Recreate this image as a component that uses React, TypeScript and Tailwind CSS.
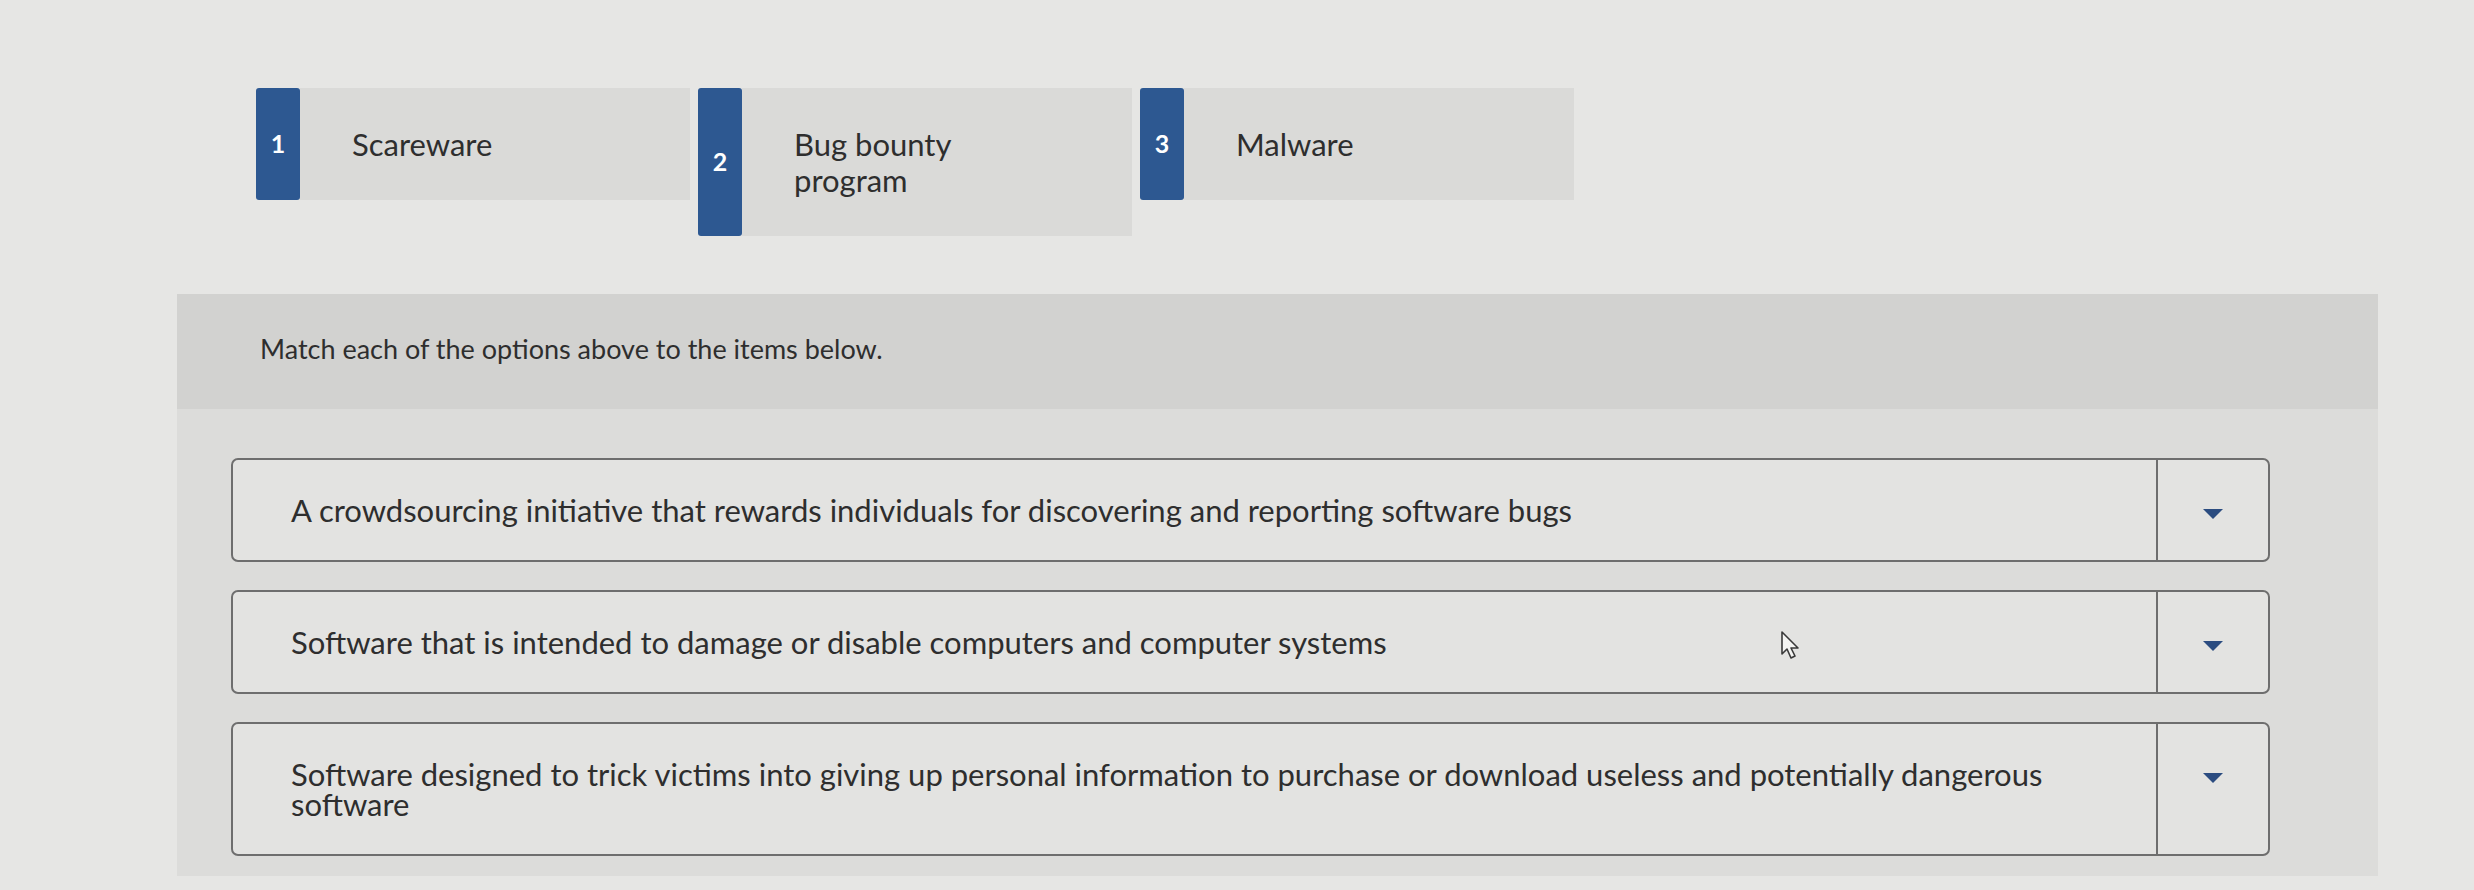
const options = [
  { n: "1", label: "Scareware" },
  { n: "2", label: "Bug bounty program" },
  { n: "3", label: "Malware" },
];

const items = [
  "A crowdsourcing initiative that rewards individuals for discovering and reporting software bugs",
  "Software that is intended to damage or disable computers and computer systems",
  "Software designed to trick victims into giving up personal information to purchase or download useless and potentially dangerous software",
];

const Option = ({ n, label }: { n: string; label: string }) => (
  <div className="flex items-stretch w-[434px]">
    <div className="w-[44px] shrink-0 bg-[#2d5891] rounded-[3px] flex items-center justify-center text-white font-bold text-[25px]">
      {n}
    </div>
    <div className="flex-1 bg-[#dadad8] pl-[52px] pr-[110px] py-[38px] text-[31px] leading-[36px] text-[#2e2e2e]">
      {label}
    </div>
  </div>
);

const MatchRow = ({ text }: { text: string }) => (
  <div className="flex border-2 border-[#6e6e6e] rounded-[7px] bg-[#e3e3e1]">
    <div className="flex-1 pl-[58px] pr-[60px] py-[35px] text-[31px] leading-[30px] text-[#2e2e2e]">
      {text}
    </div>
    <div className="w-[112px] shrink-0 border-l-2 border-[#6e6e6e] flex justify-center pt-[48px]">
      <svg width="22" height="12" viewBox="0 0 22 12">
        <path d="M1 1 L21 1 L11 11 Z" fill="#2b4c80" />
      </svg>
    </div>
  </div>
);

export default function App() {
  return (
    <div
      className="relative w-[2474px] h-[890px] overflow-hidden bg-[#e6e6e4] pl-[177px] pt-[88px]"
      style={{ fontFamily: "Lato, 'Open Sans', sans-serif" }}
    >
      <div className="flex items-start gap-[8px] ml-[79px]">
        {options.map((o) => (
          <Option key={o.n} n={o.n} label={o.label} />
        ))}
      </div>

      <div className="mt-[58px] w-[2201px] h-[582px] bg-[#dcdcda]">
        <div className="h-[115px] bg-[#d2d2d0] pl-[83px] pt-[35px] text-[27px] text-[#2e2e2e]">
          Match each of the options above to the items below.
        </div>
        <div className="flex flex-col gap-[28px] pl-[54px] pr-[108px] pt-[49px]">
          {items.map((t) => (
            <MatchRow key={t} text={t} />
          ))}
        </div>
      </div>

      <svg
        className="absolute left-[1780px] top-[630px]"
        width="22"
        height="30"
        viewBox="0 0 22 30"
      >
        <path
          d="M2 2 L2 24 L7 19 L11 28 L15 26 L11 18 L18 18 Z"
          fill="#f4f4f2"
          stroke="#3a3a3a"
          strokeWidth="1.6"
          strokeLinejoin="round"
        />
      </svg>
    </div>
  );
}
